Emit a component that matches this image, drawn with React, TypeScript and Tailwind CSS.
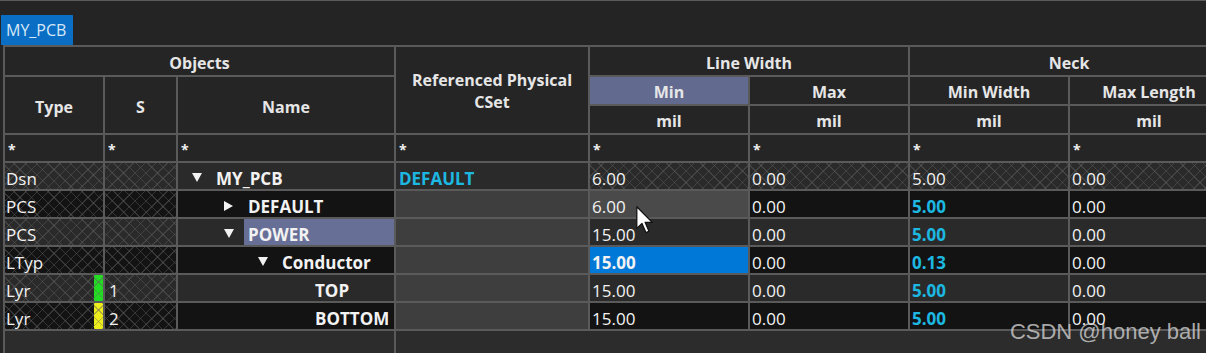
import type { ReactNode } from "react";

type Tone = "light" | "dark";

type Row = {
  type: string;
  s: string;
  marker?: "green" | "yellow";
  name: string;
  depth: 0 | 1 | 2 | 3;
  arrow?: "down" | "right";
  picked?: boolean;
  ref: string;
  min: string;
  max: string;
  minWidth: string;
  maxLength: string;
  tone: Tone;
};

const rows: Row[] = [
  { type: "Dsn", s: "", name: "MY_PCB", depth: 0, arrow: "down", ref: "DEFAULT", min: "6.00", max: "0.00", minWidth: "5.00", maxLength: "0.00", tone: "light" },
  { type: "PCS", s: "", name: "DEFAULT", depth: 1, arrow: "right", ref: "", min: "6.00", max: "0.00", minWidth: "5.00", maxLength: "0.00", tone: "dark" },
  { type: "PCS", s: "", name: "POWER", depth: 1, arrow: "down", picked: true, ref: "", min: "15.00", max: "0.00", minWidth: "5.00", maxLength: "0.00", tone: "light" },
  { type: "LTyp", s: "", name: "Conductor", depth: 2, arrow: "down", ref: "", min: "15.00", max: "0.00", minWidth: "0.13", maxLength: "0.00", tone: "dark" },
  { type: "Lyr", s: "1", marker: "green", name: "TOP", depth: 3, ref: "", min: "15.00", max: "0.00", minWidth: "5.00", maxLength: "0.00", tone: "light" },
  { type: "Lyr", s: "2", marker: "yellow", name: "BOTTOM", depth: 3, ref: "", min: "15.00", max: "0.00", minWidth: "5.00", maxLength: "0.00", tone: "dark" },
];

// lattice fill used by the read-only cells
const hatch =
  "bg-[image:repeating-linear-gradient(45deg,rgba(96,96,96,0.45)_0px,rgba(96,96,96,0.45)_1px,transparent_1px,transparent_8px),repeating-linear-gradient(-45deg,rgba(96,96,96,0.45)_0px,rgba(96,96,96,0.45)_1px,transparent_1px,transparent_8px)]";

const toneBg: Record<Tone, string> = {
  light: "bg-[#2a2a2a]",
  dark: "bg-[#131313]",
};

const indent = ["pl-[14px]", "pl-[46px]", "pl-[80px]", "pl-[113px]"];

function Head({ className = "pt-[3px]", bg = "bg-[#252525]", children }: { className?: string; bg?: string; children?: ReactNode }) {
  return (
    <div className={`flex items-center justify-center text-center text-[16px] font-bold leading-[22px] text-[#e6e6e6] ${bg} ${className}`}>
      {children}
    </div>
  );
}

function Filter() {
  return <div className="flex items-center bg-[#252525] pl-[3px] pt-[2px] text-[14px] font-bold text-[#f0f0f0]">*</div>;
}

function Arrow({ dir }: { dir: "down" | "right" }) {
  return dir === "down" ? (
    <svg width="10" height="9" viewBox="0 0 10 9">
      <path d="M0 0 L10 0 L5 9 Z" fill="#f2f2f2" />
    </svg>
  ) : (
    <svg width="9" height="10" viewBox="0 0 9 10">
      <path d="M0 0 L9 5 L0 10 Z" fill="#f2f2f2" />
    </svg>
  );
}

function Cursor() {
  return (
    <svg className="absolute left-[636px] top-[205px]" width="17" height="28" viewBox="0 0 12 20">
      <path d="M0.5 0.5 L0.5 16 L4.2 12.5 L7 19 L9.2 18 L6.5 11.7 L11.5 11.7 Z" fill="#ffffff" stroke="#111" strokeWidth="0.9" strokeLinejoin="round" />
    </svg>
  );
}

function minCell(i: number, tone: Tone) {
  if (i === 0) return `bg-[#2a2a2a] ${hatch}`;
  if (i === 1) return "bg-[#4a4a4a]";
  if (i === 3) return "bg-[#0078d7] font-bold";
  return toneBg[tone];
}

export default function App() {
  return (
    <div className="relative h-[353px] w-[1206px] overflow-hidden border-t border-[#5c5c5c] bg-[#242424] font-['Open_Sans','Noto_Sans',sans-serif] text-[#f2f2f2]">
      <div className="flex h-[44px] items-end pl-[1px]">
        <div className="flex h-[30px] w-[72px] items-center bg-[#0a6ec4] pl-[5px] text-[16px] text-[#d6e8f7]">MY_PCB</div>
      </div>

      <div className="ml-[3px] bg-[#5a5a5a] pl-[2px] pt-[2px]">
        <div className="grid grid-cols-[98px_71px_216px_192px_158px_158px_158px_158px] grid-rows-[28px_27px_27px_26px_repeat(6,26px)_22px] gap-[2px]">
          <Head className="col-span-3 pt-[4px]">Objects</Head>
          <Head className="row-span-3 items-start pt-[22px]">
            Referenced Physical
            <br />
            CSet
          </Head>
          <Head className="col-span-2 pt-[4px]">Line Width</Head>
          <Head className="col-span-2 pt-[4px]">Neck</Head>

          <Head className="row-span-2 pt-[3px]">Type</Head>
          <Head className="row-span-2 pt-[3px]">S</Head>
          <Head className="row-span-2 pt-[3px]">Name</Head>
          <Head bg="bg-[#626a8f]">Min</Head>
          <Head>Max</Head>
          <Head>Min Width</Head>
          <Head>Max Length</Head>

          <Head>mil</Head>
          <Head>mil</Head>
          <Head>mil</Head>
          <Head>mil</Head>

          {Array.from({ length: 8 }).map((_, i) => (
            <Filter key={i} />
          ))}

          {rows.map((row, i) => (
            <div key={i} className="contents text-[17px] leading-none">
              <div className={`flex items-center justify-between pl-[1px] ${toneBg[row.tone]} ${hatch}`}>
                <span className="pt-[5px]">{row.type}</span>
                {row.marker && (
                  <span className={`h-full w-[9px] ${row.marker === "green" ? "bg-[#22dd22]" : "bg-[#eded1c]"} ${hatch}`} />
                )}
              </div>
              <div className={`flex items-center pl-[4px] pt-[5px] ${toneBg[row.tone]} ${hatch}`}>{row.s}</div>
              <div className={`flex items-stretch font-bold ${indent[row.depth]} ${toneBg[row.tone]}`}>
                <span className="flex w-[20px] items-center pt-[3px]">{row.arrow && <Arrow dir={row.arrow} />}</span>
                <span className={`flex flex-1 items-center pl-[4px] pt-[5px] ${row.picked ? "bg-[#676f96]" : ""}`}>{row.name}</span>
              </div>
              <div className={`flex items-center pl-[3px] pt-[5px] font-bold text-[#1db8e2] ${i === 0 ? "bg-[#2a2a2a]" : "bg-[#3e3e3e]"}`}>
                {row.ref}
              </div>
              <div className={`flex items-center pl-[2px] pt-[5px] ${minCell(i, row.tone)}`}>{row.min}</div>
              <div className={`flex items-center pl-[2px] pt-[5px] ${i === 0 ? `bg-[#2a2a2a] ${hatch}` : toneBg[row.tone]}`}>{row.max}</div>
              <div className={`flex items-center pl-[2px] pt-[5px] ${i === 0 ? `bg-[#2a2a2a] ${hatch}` : `${toneBg[row.tone]} font-bold text-[#1db8e2]`}`}>
                {row.minWidth}
              </div>
              <div className={`flex items-center pl-[2px] pt-[5px] ${i === 0 ? `bg-[#2a2a2a] ${hatch}` : toneBg[row.tone]}`}>{row.maxLength}</div>
            </div>
          ))}

          <div className="col-span-3 bg-[#2c2c2c]" />
          <div className="col-span-5 bg-[#2c2c2c]" />
        </div>
      </div>

      <Cursor />
      <div className="absolute right-[5px] top-[320px] font-['Liberation_Sans',sans-serif] text-[22px] leading-none text-[#d0d0d0]/80">
        CSDN @honey ball
      </div>
    </div>
  );
}
